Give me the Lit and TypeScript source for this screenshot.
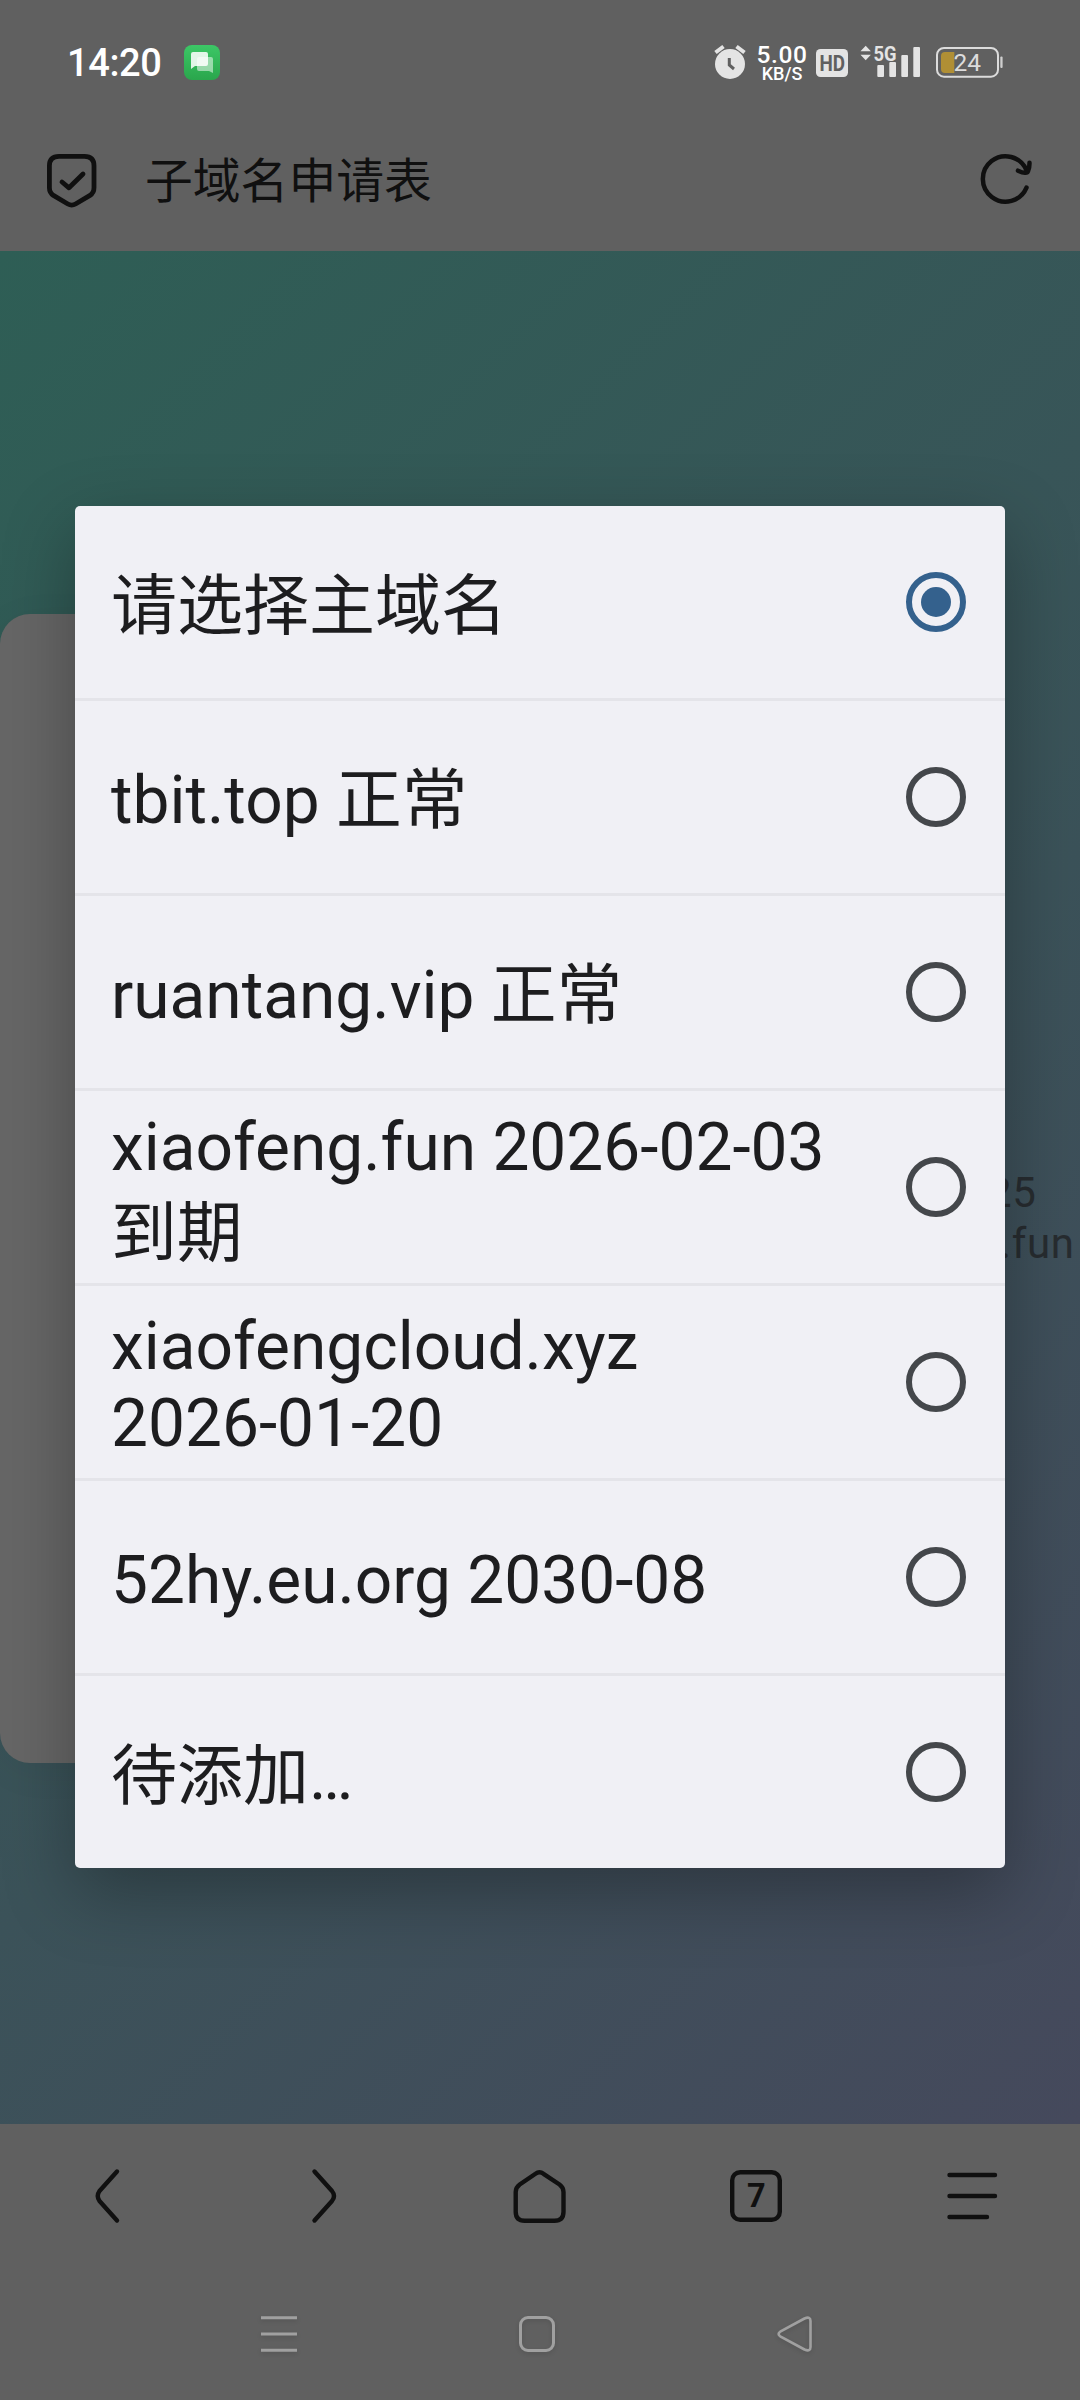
import { LitElement, html, css, svg } from "lit";
import { customElement, property, state } from "lit/decorators.js";
import { classMap } from "lit/directives/class-map.js";

interface Option {
  lines: string[];
  kind?: "cjk" | "tall";
}

const OPTIONS: Option[] = [
  { lines: ["请选择主域名"], kind: "cjk" },
  { lines: ["tbit.top 正常"] },
  { lines: ["ruantang.vip 正常"] },
  { lines: ["xiaofeng.fun 2026-02-03", "到期"], kind: "tall" },
  { lines: ["xiaofengcloud.xyz", "2026-01-20"] },
  { lines: ["52hy.eu.org 2030-08"] },
  { lines: ["待添加…"], kind: "cjk" },
];

@customElement("status-bar")
class StatusBar extends LitElement {
  static styles = css`
    :host {
      display: flex;
      justify-content: space-between;
      height: 110px;
      box-sizing: border-box;
      padding: 40px 76px 0 67px;
      font-family: Roboto, "Noto Sans CJK SC", sans-serif;
    }
    .left {
      display: flex;
      gap: 22px;
    }
    .time {
      font-size: 38px;
      font-weight: 500;
      line-height: 46px;
      letter-spacing: -0.4px;
      width: 95px;
      color: #fff;
      white-space: nowrap;
    }
    svg {
      display: block;
    }
    .msg {
      margin-top: 5px;
    }
    .right {
      display: flex;
    }
    .speed {
      width: 52px;
      margin-left: 1px;
      padding-top: 5px;
      color: #fff;
      font-weight: 500;
      text-align: center;
      white-space: nowrap;
    }
    .rate {
      font-size: 24.5px;
      line-height: 20px;
      height: 20px;
      letter-spacing: 0.6px;
    }
    .unit {
      font-size: 18px;
      line-height: 18px;
      height: 18px;
    }
  `;
  render() {
    return html`
      <div class="left">
        <div class="time">14:20</div>
        <svg class="msg" width="36" height="35" viewBox="0 0 36 35">
          <defs>
            <linearGradient id="g" x1="0" y1="0" x2="0" y2="1">
              <stop offset="0" stop-color="#3cc766" />
              <stop offset="1" stop-color="#2aa64c" />
            </linearGradient>
          </defs>
          <rect width="36" height="35" rx="8" fill="url(#g)" />
          <path d="M15 12h12q2 0 2 2v14l-4-2H15q-2 0-2-2V14q0-2 2-2z" fill="#fff" opacity=".5" />
          <path d="M9 7h13q2 0 2 2v10q0 2-2 2H11l-4 3V9q0-2 2-2z" fill="#fff" opacity=".86" />
        </svg>
      </div>
      <div class="right">
        <svg width="43" height="44" viewBox="712 40 43 44">
          <path d="M715.5 52.5l8-6M744.5 52.5l-8-6" stroke="#e4e4e4" stroke-width="4" />
          <circle cx="730" cy="64" r="15" fill="#e4e4e4" />
          <path d="M729.3 58v7l4.7 4" fill="none" stroke="#606060" stroke-width="3" />
        </svg>
        <div class="speed">
          <div class="rate">5.00</div>
          <div class="unit">KB/S</div>
        </div>
        <svg width="196" height="44" viewBox="808 40 196 44" font-family="Roboto, sans-serif">
          <rect x="816" y="49" width="32" height="28" rx="4.5" fill="#e4e4e4" />
          <text x="819.5" y="71" font-size="22.5" font-weight="700" fill="#606060" textLength="25.5" lengthAdjust="spacingAndGlyphs">HD</text>
          <path d="M860.5 51.3l5.2-5.6 5.2 5.6zM860.5 54.7l5.2 5.6 5.2-5.6z" fill="#e4e4e4" />
          <text x="873.5" y="60.6" font-size="20.5" font-weight="700" fill="#e4e4e4" textLength="23" lengthAdjust="spacingAndGlyphs">5G</text>
          <g fill="#e4e4e4">
            <rect x="877.3" y="65" width="6.7" height="12" rx="1" />
            <rect x="889.3" y="62" width="6.7" height="15" rx="1" />
            <rect x="901.3" y="55" width="6.7" height="22" rx="1" />
            <rect x="913.3" y="47" width="6.7" height="30" rx="1" />
          </g>
          <rect x="937" y="48" width="61" height="28.7" rx="7" fill="none" stroke="#dcdcdc" stroke-width="2" />
          <path d="M954.3 52h-9.3q-4 0-4 4v13q0 4 4 4h9.3z" fill="#b08f35" />
          <rect x="1000.3" y="56.5" width="2.3" height="11.5" rx="1" fill="#cfcfcf" />
          <text x="953.5" y="71.3" font-size="24" fill="#dcdcdc" textLength="27.5" lengthAdjust="spacingAndGlyphs">24</text>
        </svg>
      </div>
    `;
  }
}

@customElement("title-bar")
class TitleBar extends LitElement {
  static styles = css`
    :host {
      display: flex;
      align-items: center;
      height: 141px;
      box-sizing: border-box;
      padding: 0 47px 0 46px;
      font-family: Roboto, "Noto Sans CJK SC", sans-serif;
    }
    svg {
      display: block;
      flex: none;
    }
    .title {
      flex: 1;
      margin-left: 47px;
      padding-top: 3px;
      font-size: 47.8px;
      line-height: 70px;
      color: #101010;
    }
    .reload {
      margin-bottom: 3px;
    }
  `;
  render() {
    return html`
      <svg width="52" height="60" viewBox="46 150.500 52 60" fill="none" stroke="#101010" stroke-width="4.8" stroke-linecap="round" stroke-linejoin="round">
        <path d="M59 155.8h25.5q9.5 0 9.5 9.5v22q0 5-4 7.6l-14.5 8.6q-3.8 2.2-7.6 0L53.4 194.9q-4-2.6-4-7.6v-22q0-9.5 9.6-9.5z" />
        <path d="M62 181.5l7 5.8 14-13.8" />
      </svg>
      <div class="title">子域名申请表</div>
      <svg class="reload" width="54" height="56" viewBox="979 151 54 56" fill="none" stroke="#101010" stroke-width="4.5" stroke-linecap="round" stroke-linejoin="round">
        <path d="M1026.5 187.7A22.7 22.7 0 1 1 1026.4 170" />
        <path d="M1018 170.700q9 4 10 .5q1.600-3.500 1.500-8.500" />
      </svg>
    `;
  }
}

@customElement("page-view")
class PageView extends LitElement {
  static styles = css`
    :host {
      display: flex;
      height: 1873px;
      box-sizing: border-box;
      padding-top: 363px;
      overflow: hidden;
      background: linear-gradient(135deg, #2e5e55, #45495c);
      font-family: Roboto, sans-serif;
    }
    .card {
      width: 960px;
      height: 1149px;
      flex: none;
      border-radius: 30px;
      background: #666;
      box-shadow: 0 8px 40px rgba(0, 0, 0, 0.05);
    }
    .note {
      padding: 553px 0 0 28px;
      font-size: 42px;
      line-height: 51px;
      letter-spacing: 0.6px;
      color: #272c30;
      white-space: nowrap;
    }
    .note .host {
      margin-left: 12px;
    }
  `;
  render() {
    return html`
      <div class="card"></div>
      <div class="note">
        <div>25</div>
        <div class="host">.fun</div>
      </div>
    `;
  }
}

@customElement("browser-nav")
class BrowserNav extends LitElement {
  static styles = css`
    :host {
      display: grid;
      grid-template-columns: repeat(5, 1fr);
      height: 144px;
      align-items: center;
      justify-items: center;
    }
    svg {
      display: block;
    }
  `;
  private icon(body: unknown) {
    return html`<svg width="60" height="60" viewBox="-30 -30 60 60" fill="none" stroke="#101010" stroke-width="4.4" stroke-linecap="round" stroke-linejoin="round">${body}</svg>`;
  }
  render() {
    return html`
      ${this.icon(svg`<path d="M9-24.5L-8.5-5Q-12 0-8.5 5L9 24.5" />`)}
      ${this.icon(svg`<path d="M-9.5-24.5L8-5Q12 0 8 5L-9.5 24.5" />`)}
      ${this.icon(svg`<path d="M-4.5-22.2Q-.5-25.2 3.5-22.2L19.5-11.5Q23.5-8.5 23.5-4V15.7Q23.5 24.7 14.5 24.7H-15.3Q-24.3 24.7-24.3 15.7V-4Q-24.3-8.5-20.3-11.5Z" />`)}
      ${this.icon(svg`<rect x="-23.8" y="-23.8" width="47.6" height="47.6" rx="8" /><text x=".3" y="11" text-anchor="middle" font-family="Roboto, sans-serif" font-size="32.5" font-weight="700" fill="#101010" stroke="none">7</text>`)}
      ${this.icon(svg`<path d="M-22.5-21H23M-22.5 0H23M-22.5 21H15" />`)}
    `;
  }
}

@customElement("system-nav")
class SystemNav extends LitElement {
  static styles = css`
    :host {
      display: grid;
      grid-template-columns: repeat(3, 258px);
      height: 132px;
      padding-left: 150px;
      align-items: center;
      justify-items: center;
    }
    svg {
      display: block;
      filter: drop-shadow(0 2px 2px rgba(0, 0, 0, 0.12));
    }
  `;
  private icon(body: unknown) {
    return html`<svg width="44" height="44" viewBox="-22 -22 44 44" fill="none" stroke="#a0a0a0" stroke-width="3" stroke-linejoin="round">${body}</svg>`;
  }
  render() {
    return html`
      ${this.icon(svg`<path d="M-18-16.3H18M-18 0H18M-18 16.3H18" />`)}
      ${this.icon(svg`<rect x="-16.5" y="-16.5" width="33" height="33" rx="7.5" />`)}
      ${this.icon(svg`<path d="M-14.8-2.3L9.5-15.5Q15.5-18 15.5-13V13Q15.5 18 9.5 15.5L-14.8 2.3Q-18 0-14.8-2.3Z" stroke-width="2.6" />`)}
    `;
  }
}

@customElement("option-row")
class OptionRow extends LitElement {
  @property({ attribute: false }) option!: Option;
  @property({ type: Boolean }) checked = false;

  static styles = css`
    :host {
      display: flex;
      align-items: center;
      justify-content: space-between;
      height: 192px;
      box-sizing: border-box;
      padding: 0 39px 0 36px;
      cursor: pointer;
    }
    .label {
      padding-top: 6px;
      font-size: 65.8px;
      line-height: 77px;
      color: #1d1d1f;
      white-space: nowrap;
    }
    .label.cjk {
      padding-top: 9px;
      font-size: 66px;
    }
    .label.tall {
      padding-top: 8px;
      line-height: 86px;
    }
    .line {
      height: 1lh;
    }
    .radio {
      display: grid;
      place-items: center;
      flex: none;
      width: 60px;
      height: 60px;
      box-sizing: border-box;
      border: 6px solid #44474b;
      border-radius: 50%;
    }
    .radio.on {
      border-color: #34618d;
    }
    .dot {
      width: 30px;
      height: 30px;
      border-radius: 50%;
      background: #34618d;
    }
  `;
  render() {
    const { lines, kind } = this.option;
    return html`
      <div class=${classMap({ label: true, tall: kind === "tall", cjk: kind === "cjk" })}>
        ${lines.map((l) => html`<div class="line">${l}</div>`)}
      </div>
      <div class=${classMap({ radio: true, on: this.checked })}>
        ${this.checked ? html`<div class="dot"></div>` : ""}
      </div>
    `;
  }
}

@customElement("app-root")
class AppRoot extends LitElement {
  @state() private selected = 0;

  static styles = css`
    :host {
      display: block;
      position: relative;
      width: 1080px;
      height: 2400px;
      overflow: hidden;
      background: #606060;
      font-family: Roboto, "Noto Sans CJK SC", sans-serif;
    }
    .overlay {
      position: absolute;
      inset: 0;
      display: flex;
      flex-direction: column;
      align-items: center;
      padding-top: 506px;
    }
    .dialog {
      width: 930px;
      border-radius: 5px;
      overflow: hidden;
      background: #f0f0f5;
      box-shadow: 0 24px 72px rgba(0, 0, 0, 0.3);
    }
    .row + .row {
      border-top: 3px solid #e4e4e9;
      height: 195px;
    }
  `;
  render() {
    return html`
      <status-bar></status-bar>
      <title-bar></title-bar>
      <page-view></page-view>
      <browser-nav></browser-nav>
      <system-nav></system-nav>
      <div class="overlay">
        <div class="dialog">
          ${OPTIONS.map(
            (o, i) => html`<option-row
              class="row"
              .option=${o}
              ?checked=${this.selected === i}
              @click=${() => (this.selected = i)}
            ></option-row>`
          )}
        </div>
      </div>
    `;
  }
}
